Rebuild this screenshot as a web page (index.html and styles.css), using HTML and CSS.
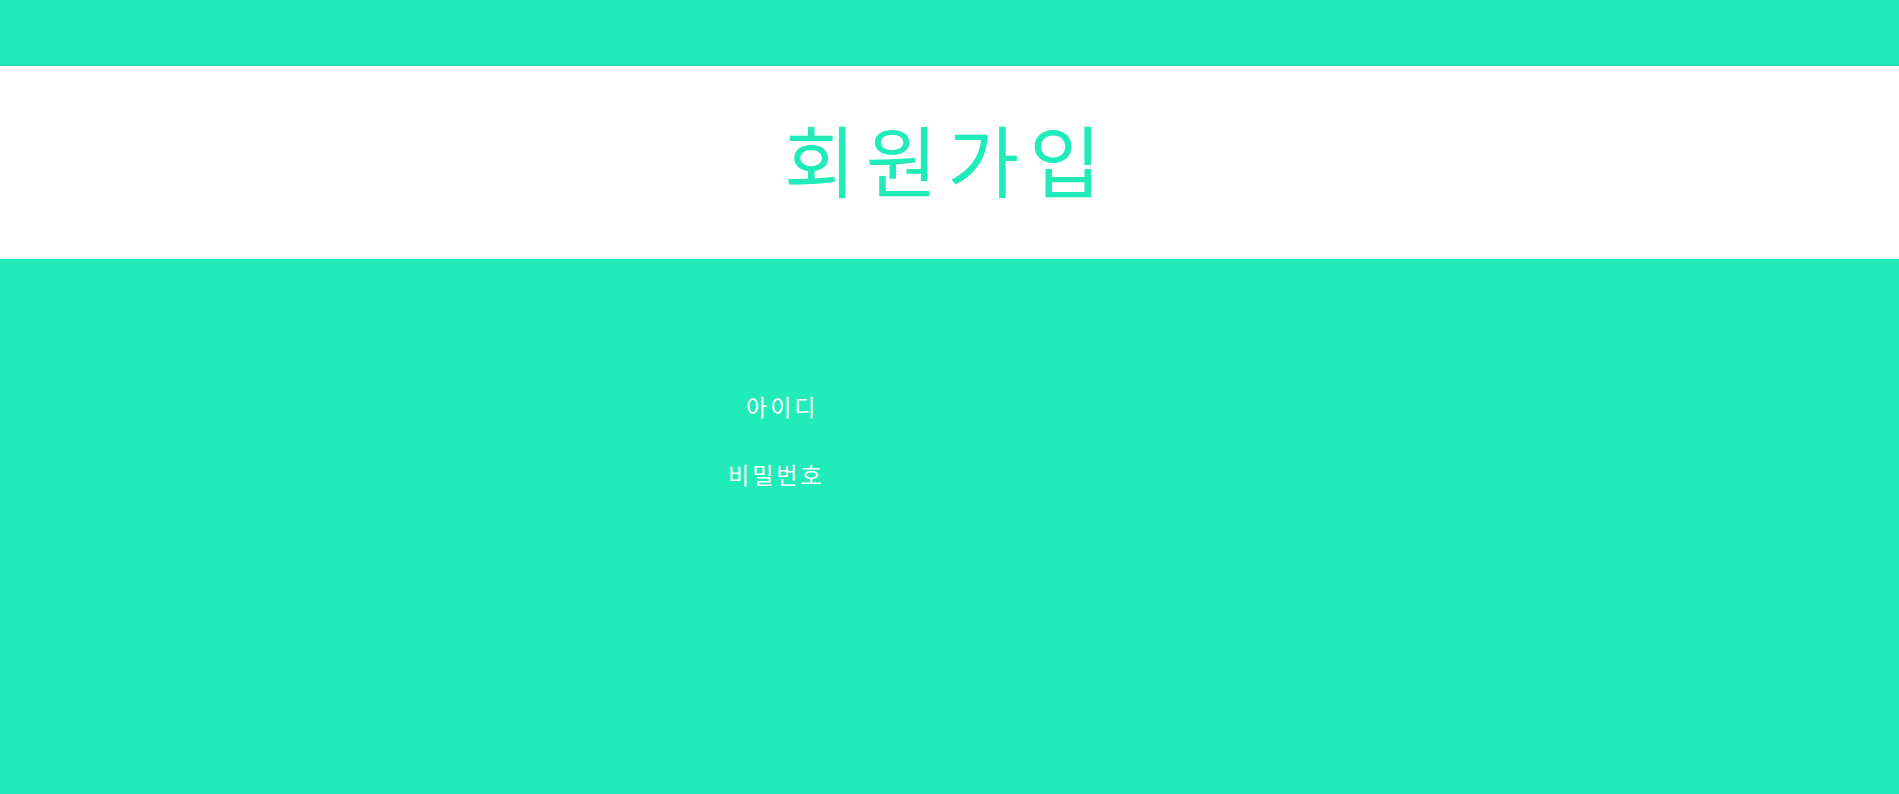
FILE: index.html
```html
<!DOCTYPE html>
<html lang="ko">
<head>
<meta charset="utf-8">
<title>회원가입</title>
<link rel="stylesheet" href="styles.css">
</head>
<body>
<header class="topbar"></header>
<section class="hero">
  <h1 class="title">회원가입</h1>
</section>
<main class="content">
  <form class="form">
    <label class="label label-id">아이디</label>
    <label class="label label-pw">비밀번호</label>
  </form>
</main>
</body>
</html>
```

FILE: styles.css
```css
html, body {
  margin: 0;
  padding: 0;
  height: 100%;
}
body {
  background: #21ebb9;
  font-family: "Noto Sans CJK KR", "Noto Sans", sans-serif;
  overflow: hidden;
}
.topbar {
  height: 65px;
  background: #21ebb9;
  border-bottom: 1px solid #1fd3a7;
}
.hero {
  height: 193px;
  background: #ffffff;
  display: flex;
  align-items: center;
  justify-content: center;
}
.title {
  margin: 0;
  font-size: 78px;
  font-weight: 400;
  letter-spacing: 10px;
  color: #21ebb9;
  line-height: 1;
  padding-right: 4px;
  padding-bottom: 10px;
}
.content {
  padding-top: 136px;
}
.form {
  display: flex;
  flex-direction: column;
  gap: 45px;
}
.label {
  color: #ffffff;
  font-size: 23px;
  line-height: 23px;
  font-weight: 400;
  letter-spacing: 3px;
}
.label-id {
  margin-left: 746px;
}
.label-pw {
  margin-left: 728px;
}
```
